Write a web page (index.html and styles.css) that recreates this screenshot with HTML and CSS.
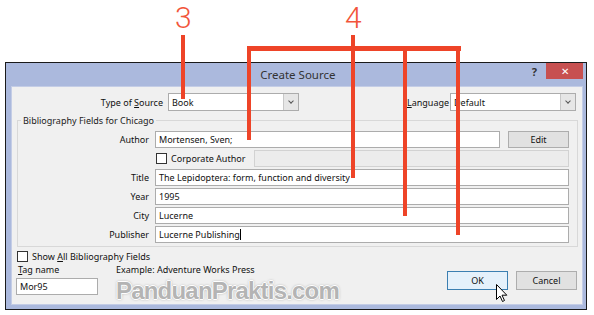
FILE: index.html
```html
<!DOCTYPE html>
<html lang="en">
<head>
    <meta charset="UTF-8">
    <title>Create Source</title>
    <link rel="stylesheet" href="styles.css">
</head>
<body>
    <div class="page">
        <div class="dialog">
            <div class="titlebar">
                <span class="title">Create Source</span>
                <span class="help">?</span>
                <span class="close">&#x2715;</span>
            </div>
            <div class="client">
                <div class="source-row">
                    <span class="src-label">Type of <u>S</u>ource</span>
                    <div class="combo type-combo"><span>Book</span><i class="arrow"></i></div>
                    <span class="lang-label"><u>L</u>anguage</span>
                    <div class="combo lang-combo"><span>Default</span><i class="arrow"></i></div>
                </div>

                <fieldset class="group">
                    <legend>Bibliography Fields for Chicago</legend>
                    <div class="field">
                        <label>Author</label>
                        <div class="row-inner">
                            <div class="box author-box">Mortensen, Sven;</div>
                            <div class="btn edit-btn">Edit</div>
                        </div>
                    </div>
                    <div class="field">
                        <label></label>
                        <div class="row-inner">
                            <span class="check"></span>
                            <span class="corp">Corporate Author</span>
                            <div class="box disabled"></div>
                        </div>
                    </div>
                    <div class="field">
                        <label>Title</label>
                        <div class="box">The Lepidoptera: form, function and diversity</div>
                    </div>
                    <div class="field">
                        <label>Year</label>
                        <div class="box">1995</div>
                    </div>
                    <div class="field">
                        <label>City</label>
                        <div class="box">Lucerne</div>
                    </div>
                    <div class="field">
                        <label>Publisher</label>
                        <div class="box">Lucerne Publishing<span class="caret"></span></div>
                    </div>
                </fieldset>

                <div class="show-all">
                    <span class="check"></span>
                    <span>Show <u>A</u>ll Bibliography Fields</span>
                </div>

                <div class="footer">
                    <div class="tag">
                        <span><u>T</u>ag name</span>
                        <div class="box tag-box">Mor95</div>
                    </div>
                    <div class="example">Example: Adventure Works Press</div>
                    <div class="buttons">
                        <div class="btn ok-btn">OK</div>
                        <div class="btn">Cancel</div>
                    </div>
                </div>
            </div>
        </div>

        <!-- callouts -->
        <span class="num num3">3</span>
        <span class="num num4">4</span>
        <div class="mark line3"></div>
        <div class="mark stem4"></div>
        <div class="mark bar4"></div>
        <div class="mark v-author"></div>
        <div class="mark v-city"></div>
        <div class="mark v-pub"></div>

        <div class="watermark">PanduanPraktis.com</div>

        <svg class="cursor" width="12" height="19" viewBox="0 0 12 19">
            <path d="M0.5 0.5 L0.5 15.5 L4 12 L6.5 17.5 L8.5 16.5 L6 11.2 L10.8 11.2 Z" fill="#fff" stroke="#000" stroke-width="1"/>
        </svg>
    </div>
</body>
</html>
```

FILE: styles.css
```css
* {
    box-sizing: border-box;
}

body {
    margin: 0;
    background: #fff;
    font-family: "Noto Sans", "Open Sans", sans-serif;
    font-size: 9px;
    color: #111;
}

.page {
    position: relative;
    width: 594px;
    height: 315px;
    padding: 62px 0 0 5px;
}

.dialog {
    width: 582px;
    height: 248px;
    border: 1px solid #1a1a1a;
    background: #abb9dd;
    display: flex;
    flex-direction: column;
}

.titlebar {
    height: 23px;
    display: flex;
    align-items: flex-start;
}

.title {
    flex: 1;
    text-align: center;
    font-size: 11.5px;
    line-height: 24px;
    color: #333;
    padding-left: 58px;
}

.help {
    font-weight: bold;
    font-size: 11px;
    color: #333;
    line-height: 18px;
    margin-right: 9px;
}

.close {
    width: 37px;
    height: 16px;
    background: #c75050;
    color: #fff;
    font-size: 10px;
    line-height: 16px;
    text-align: center;
    margin-right: 3px;
}

.client {
    flex: 1;
    margin: 0 3px 4px 5px;
    background: #f0f0f0;
    border: 1px solid #c4cde6;
    display: flex;
    flex-direction: column;
}

.source-row {
    display: flex;
    align-items: center;
    height: 18px;
    margin-top: 6px;
}

.src-label {
    width: 156px;
    text-align: right;
    padding-right: 5px;
}

.combo {
    height: 18px;
    background: #fff;
    border: 1px solid #acacac;
    display: flex;
    align-items: center;
    padding-left: 3px;
}

.combo span {
    flex: 1;
}

.arrow {
    width: 15px;
    height: 16px;
    background: #e6e6e6;
    border-left: 1px solid #c8c8c8;
    position: relative;
}

.arrow::after {
    content: "";
    position: absolute;
    left: 5px;
    top: 5px;
    width: 3px;
    height: 3px;
    border-right: 1px solid #555;
    border-bottom: 1px solid #555;
    transform: rotate(45deg);
}

.type-combo {
    width: 131px;
}

.lang-label {
    margin-left: 108px;
    width: 43px;
    white-space: nowrap;
}

.lang-combo {
    width: 126px;
}

.group {
    margin: 3px 4px 0 5px;
    padding: 4px 8px 3px 0;
    border: 1px solid #d8d8d8;
    display: flex;
    flex-direction: column;
    gap: 2px;
}

.group legend {
    margin-left: 3px;
    padding: 0 2px;
    color: #222;
}

.field {
    display: grid;
    grid-template-columns: 131px 1fr;
    column-gap: 6px;
    align-items: center;
    height: 17px;
}

.field label {
    text-align: right;
}

.row-inner {
    display: flex;
    align-items: center;
    height: 17px;
}

.box {
    height: 17px;
    background: #fff;
    border: 1px solid #acacac;
    padding-left: 3px;
    line-height: 15px;
    white-space: nowrap;
}

.author-box {
    flex: 1;
    margin-right: 8px;
}

.btn {
    height: 19px;
    width: 61px;
    background: #e1e1e1;
    border: 1px solid #adadad;
    text-align: center;
    line-height: 17px;
}

.edit-btn {
    height: 17px;
    line-height: 15px;
}

.check {
    width: 11px;
    height: 11px;
    border: 1px solid #333;
    background: #fff;
    margin: 0 4px 0 1px;
}

.corp {
    width: 83px;
}

.disabled {
    flex: 1;
    background: #ececec;
    border-color: #d2d2d2;
}

.caret {
    display: inline-block;
    width: 1px;
    height: 11px;
    background: #000;
    vertical-align: -2px;
}

.show-all {
    display: flex;
    align-items: center;
    margin: 3px 0 0 5px;
    height: 12px;
}

.show-all .check {
    margin: 0 4px 0 0;
}

.footer {
    display: flex;
    margin-top: 1px;
}

.tag {
    width: 104px;
    padding-left: 5px;
    display: flex;
    flex-direction: column;
    gap: 2px;
}

.tag span {
    padding-left: 1px;
    line-height: 13px;
}

.tag-box {
    width: 82px;
    margin-left: -1px;
    line-height: 16px;
}

.example {
    line-height: 13px;
}

.buttons {
    margin-left: auto;
    margin-right: 5px;
    padding-top: 8px;
    display: flex;
    gap: 8px;
}

.ok-btn {
    background: #e5f1fb;
    border-color: #3c7fb1;
}

.num {
    position: absolute;
    top: 0;
    font-family: Roboto, sans-serif;
    font-weight: 300;
    font-size: 30px;
    line-height: normal;
    color: #f2553a;
}

.num3 {
    left: 175px;
}

.num4 {
    left: 345px;
}

.mark {
    position: absolute;
    background: #ee4428;
}

.line3 {
    left: 181px;
    top: 35px;
    width: 4px;
    height: 64px;
}

.stem4 {
    left: 351px;
    top: 35px;
    width: 4px;
    height: 143px;
}

.bar4 {
    left: 247px;
    top: 46px;
    width: 214px;
    height: 5px;
}

.v-author {
    left: 247px;
    top: 46px;
    width: 4px;
    height: 94px;
}

.v-city {
    left: 403px;
    top: 46px;
    width: 4px;
    height: 170px;
}

.v-pub {
    left: 456px;
    top: 46px;
    width: 4px;
    height: 189px;
}

.watermark {
    position: absolute;
    left: 116px;
    top: 277px;
    font-family: "Liberation Sans", Arial, sans-serif;
    font-weight: bold;
    font-size: 24px;
    letter-spacing: -0.8px;
    line-height: 27px;
    color: #b4b4b4;
    text-shadow: 1px 0 0 #fff, -1px 0 0 #fff, 0 1px 0 #fff, 0 -1px 0 #fff, 0 0 3px #7a7a7a;
}

.cursor {
    position: absolute;
    left: 496px;
    top: 284px;
}
```
